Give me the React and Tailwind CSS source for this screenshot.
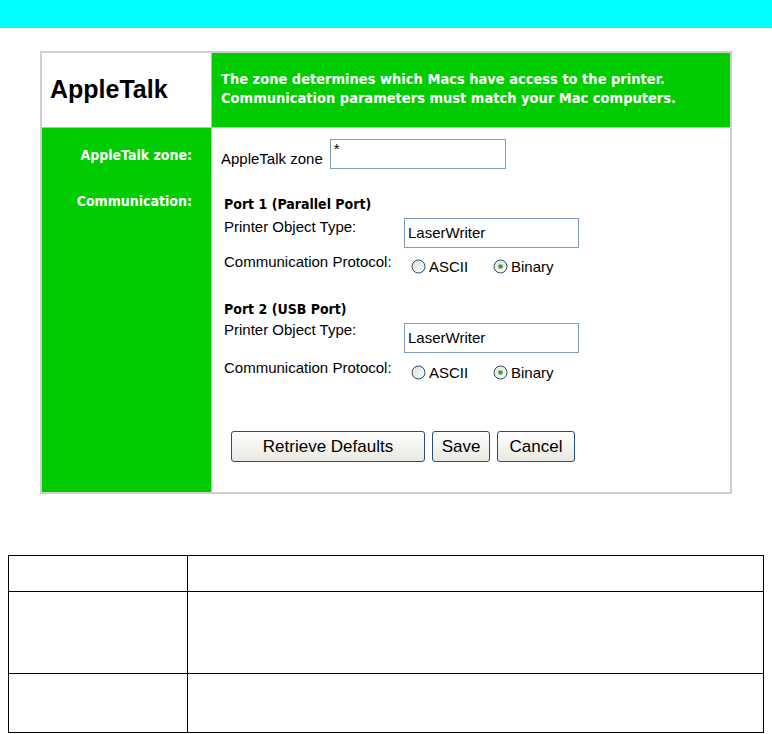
import React from 'react';

const FONT = { fontFamily: '"Liberation Sans", Arial, sans-serif' };
const BOLD = { fontFamily: '"DejaVu Sans Condensed", "DejaVu Sans", sans-serif', fontStretch: 'condensed' };

function Radio({ checked }) {
  return (
    <svg width="15" height="15" viewBox="0 0 15 15" className="shrink-0">
      <defs>
        <linearGradient id={checked ? 'rg1' : 'rg0'} x1="0" y1="0" x2="1" y2="1">
          <stop offset="0" stopColor="#dcdbd5" />
          <stop offset="1" stopColor="#ffffff" />
        </linearGradient>
      </defs>
      <circle cx="7.5" cy="7.5" r="6.5" fill={`url(#${checked ? 'rg1' : 'rg0'})`} stroke="#1c5180" strokeWidth="1" />
      {checked && <circle cx="7.5" cy="7.5" r="2.3" fill="#2fa82f" />}
    </svg>
  );
}

function Protocol({ top }) {
  return (
    <div className={`flex items-start ${top}`}>
      <span className="w-[187px] text-[15px] leading-[17px] text-black">Communication Protocol:</span>
      <div className="mt-[5px] flex items-center">
        <Radio checked={false} />
        <span className="ml-[3px] w-[64px] text-[15px] leading-[17px]">ASCII</span>
        <Radio checked />
        <span className="ml-[3px] text-[15px] leading-[17px]">Binary</span>
      </div>
    </div>
  );
}

function XpButton({ children, w }) {
  return (
    <button className={`${w} h-[31px] rounded-[3px] border border-[#1f4f86] bg-linear-to-b from-white to-[#e9e8e1] text-[17px] leading-[20px] text-black`}>
      {children}
    </button>
  );
}

export default function App() {
  return (
    <div className="h-[734px] w-[772px] overflow-hidden bg-white" style={FONT}>
      {/* Top bar */}
      <div className="h-[28px] bg-[#00ffff]" />

      {/* AppleTalk settings panel */}
      <div className="ml-[40px] mt-[23px] flex h-[443px] w-[692px] flex-col border-2 border-[#cfcfcf]">
        {/* Header row */}
        <div className="flex h-[75px] border-b border-[#88e288]">
          <div className="w-[170px] border-r border-[#88e288] bg-white pl-[8px] pt-[22px]">
            <span className="text-[25px] font-bold leading-[28px] text-black">AppleTalk</span>
          </div>
          <div className="flex-1 bg-[#00cc00] pl-[9px] pt-[17px] text-[14.5px] font-bold leading-[19px] text-white" style={BOLD}>
            <div>The zone determines which Macs have access to the printer.</div>
            <div>Communication parameters must match your Mac computers.</div>
          </div>
        </div>

        {/* Body row */}
        <div className="flex flex-1">
          <div className="w-[170px] border-r border-[#88e288] bg-[#00cc00] pr-[19px] text-right text-[14px] font-bold leading-[16px] text-white" style={BOLD}>
            <div className="mt-[19px]">AppleTalk zone:</div>
            <div className="mt-[30px]">Communication:</div>
          </div>

          <div className="flex-1 pl-[9px]">
            {/* Zone */}
            <div className="mt-[11px] flex h-[30px] items-end">
              <span className="mb-[2px] text-[15px] leading-[17px]">AppleTalk zone</span>
              <div className="ml-[7px] h-[30px] w-[176px] border border-[#7f9db9] bg-white pl-[3px] text-[15px] leading-[17px]">*</div>
            </div>

            <div className="pl-[3px]">
              {/* Port 1 */}
              <div className="mt-[27px] text-[14px] font-bold leading-[16px]" style={BOLD}>Port 1 (Parallel Port)</div>
              <div className="mt-[6px] flex items-start">
                <span className="w-[180px] text-[15px] leading-[17px]">Printer Object Type:</span>
                <div className="flex h-[30px] w-[175px] items-center border border-[#7f9db9] pl-[3px] text-[15px]">LaserWriter</div>
              </div>
              <Protocol top="mt-[5px]" />

              {/* Port 2 */}
              <div className="mt-[26px] text-[14px] font-bold leading-[16px]" style={BOLD}>Port 2 (USB Port)</div>
              <div className="mt-[4px] flex items-start">
                <span className="w-[180px] text-[15px] leading-[17px]">Printer Object Type:</span>
                <div className="mt-[2px] flex h-[30px] w-[175px] items-center border border-[#7f9db9] pl-[3px] text-[15px]">LaserWriter</div>
              </div>
              <Protocol top="mt-[6px]" />

              {/* Buttons */}
              <div className="ml-[7px] mt-[50px] flex gap-[7px]">
                <XpButton w="w-[194px]">Retrieve Defaults</XpButton>
                <XpButton w="w-[58px]">Save</XpButton>
                <XpButton w="w-[78px]">Cancel</XpButton>
              </div>
            </div>
          </div>
        </div>
      </div>

      {/* Empty description table */}
      <div className="ml-[8px] mt-[61px] w-[756px] border border-black">
        <div className="grid h-[36px] grid-cols-[179px_1fr] border-b border-black">
          <div className="border-r border-black" />
          <div />
        </div>
        <div className="grid h-[82px] grid-cols-[179px_1fr] border-b border-black">
          <div className="border-r border-black" />
          <div />
        </div>
        <div className="grid h-[58px] grid-cols-[179px_1fr]">
          <div className="border-r border-black" />
          <div />
        </div>
      </div>
    </div>
  );
}
